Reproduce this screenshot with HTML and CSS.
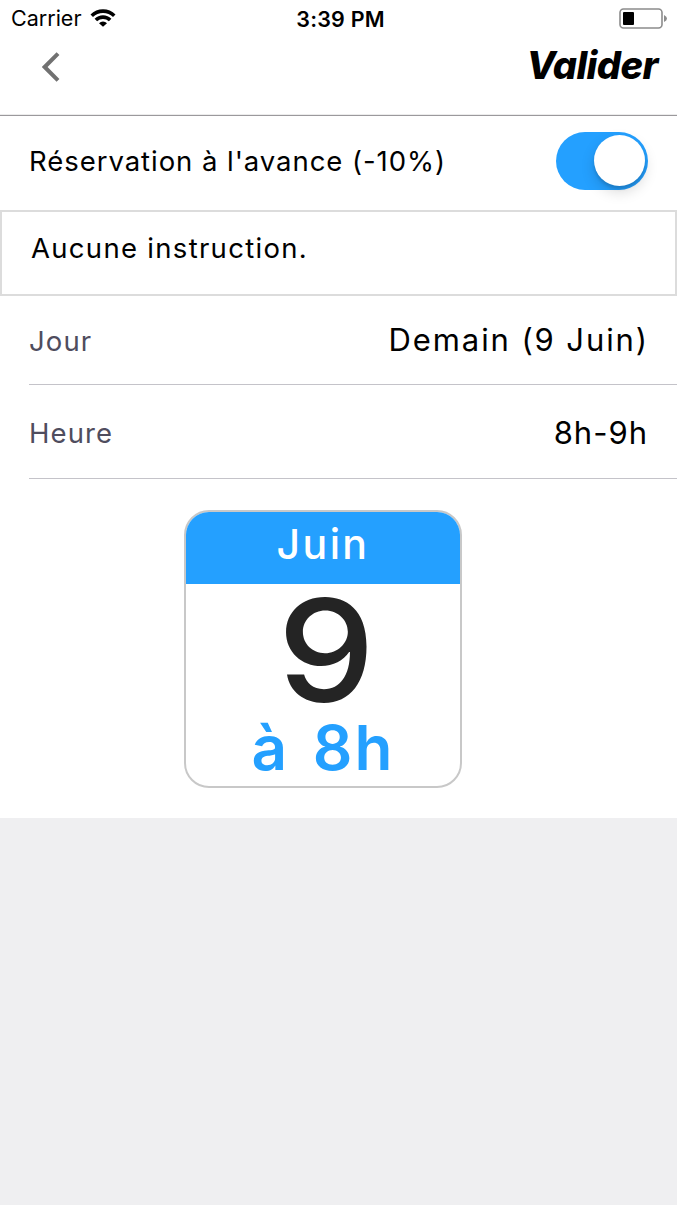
FILE: index.html
```
<!DOCTYPE html>
<html lang="fr">
<head>
    <meta charset="UTF-8">
    <meta name="viewport" content="width=device-width, initial-scale=1.0">
    <title>Réservation</title>
    <link rel="stylesheet" href="styles.css">
</head>
<body>
    <div class="status-bar">
        <div class="status-left">
            <span class="carrier">Carrier</span>
            <svg class="wifi" width="26" height="18" viewBox="0 0 26 18">
                <path d="M0.500 5.400 A17.5 17.5 0 0 1 25.500 5.400 L23 8.100 A14 14 0 0 0 3 8.100 Z"/>
                <path d="M4.600 9.800 A11.8 11.8 0 0 1 21.400 9.800 L18.900 12.300 A8.4 8.4 0 0 0 7.100 12.300 Z"/>
                <path d="M9 14.200 A5.8 5.8 0 0 1 17 14.200 L13 17.800 Z"/>
            </svg>
        </div>
        <span class="time">3:39 PM</span>
        <div class="status-right">
            <svg width="49" height="22" viewBox="0 0 49 22">
                <rect x="1" y="1" width="42" height="19" rx="3.5" fill="none" stroke="#8c8c8c" stroke-width="1.6"/>
                <rect x="4" y="4" width="11" height="13" rx="1" fill="#000"/>
                <path d="M45 7 Q48 8.500 48 10.500 Q48 12.500 45 14 Z" fill="#8c8c8c"/>
            </svg>
        </div>
    </div>

    <header class="navbar">
        <svg class="back" width="18" height="30" viewBox="0 0 18 30">
            <path d="M16 1.700 L2.700 15 L16 28.300" fill="none" stroke="#717171" stroke-width="4"/>
        </svg>
        <span class="validate">Valider</span>
    </header>

    <main class="content">
        <div class="option">
            <span class="option-label">Réservation à l'avance (-10%)</span>
            <span class="switch"><span class="knob"></span></span>
        </div>

        <div class="instruction">Aucune instruction.</div>

        <div class="row first">
            <span class="row-label">Jour</span>
            <span class="row-value day">Demain (9 Juin)</span>
        </div>
        <div class="row">
            <span class="row-label">Heure</span>
            <span class="row-value">8h-9h</span>
        </div>

        <div class="calendar">
            <div class="month">Juin</div>
            <div class="date">9</div>
            <div class="slot">à 8h</div>
        </div>
    </main>
</body>
</html>
```

FILE: styles.css
```
* {
    margin: 0;
    padding: 0;
    box-sizing: border-box;
}

body {
    background: #efeff1;
    font-family: Inter, "Liberation Sans", sans-serif;
    min-height: 100vh;
    color: #000;
}

.status-bar {
    height: 38px;
    display: grid;
    grid-template-columns: 1fr auto 1fr;
    align-items: center;
    padding: 0 9px 0 11px;
    background: #fff;
}

.status-left {
    display: flex;
    align-items: center;
    gap: 9px;
    padding-bottom: 2px;
}

.carrier {
    font-size: 21.5px;
    letter-spacing: 0;
}

.time {
    font-size: 21.5px;
    font-weight: 600;
    letter-spacing: 0.2px;
    padding: 0 0 1px 2px;
}

.status-right {
    display: flex;
    justify-content: flex-end;
}

.navbar {
    height: 78px;
    display: flex;
    justify-content: space-between;
    align-items: flex-start;
    padding: 0 19px 0 42px;
    background: #fff;
    border-bottom: 1px solid #9b999c;
    box-shadow: inset 0 -1px 0 #ececec;
}

.back {
    margin-top: 14px;
}

.validate {
    margin-top: 4px;
    font-size: 38px;
    line-height: 46px;
    font-weight: 800;
    font-style: italic;
    letter-spacing: -0.55px;
}

.content {
    height: 702px;
    background: #fff;
}

.option {
    height: 94px;
    display: flex;
    justify-content: space-between;
    align-items: center;
    padding: 0 29px 5px;
}

.option-label {
    font-size: 27.5px;
    letter-spacing: 0.95px;
}

.switch {
    width: 92px;
    height: 58px;
    border-radius: 29px;
    background: #24a0ff;
    display: flex;
    justify-content: flex-end;
    padding: 3.5px;
}

.knob {
    width: 51px;
    height: 51px;
    border-radius: 50%;
    background: #fff;
    box-shadow: 0 6px 14px rgba(0,0,0,0.15), 0 3px 3px rgba(0,0,0,0.12);
}

.instruction {
    height: 86px;
    border: 2px solid #dcdcdc;
    padding: 19px 29px;
    font-size: 27.5px;
    line-height: 34px;
    letter-spacing: 1.3px;
}

.row {
    height: 94px;
    margin-left: 29px;
    padding: 3px 29px 0 0;
    display: flex;
    justify-content: space-between;
    align-items: center;
    border-bottom: 1px solid #c4c3c9;
}

.row.first {
    height: 89px;
    padding-top: 1px;
}

.row-label {
    font-size: 27.5px;
    letter-spacing: 1.1px;
    color: #4f4d5e;
}

.row-value {
    font-size: 31px;
    letter-spacing: 1px;
    margin-top: -2px;
}

.row-value.day {
    letter-spacing: 1.9px;
    margin-right: -1px;
}

.calendar {
    width: 278px;
    height: 278px;
    margin: 31px 0 0 184px;
    border: 2px solid #c8c8c8;
    border-radius: 25px;
    overflow: hidden;
    text-align: center;
}

.month {
    height: 72px;
    background: #24a0ff;
    color: #fff;
    font-size: 41px;
    font-weight: 500;
    line-height: 65px;
    letter-spacing: 2.4px;
}

.date {
    height: 134px;
    padding-left: 6px;
    color: #242424;
    font-size: 142px;
    font-weight: 500;
    line-height: 133px;
    transform: scaleX(1.09);
}

.slot {
    color: #24a0ff;
    font-size: 62px;
    font-weight: 600;
    line-height: 60px;
    letter-spacing: 2px;
    word-spacing: 6px;
}
```
